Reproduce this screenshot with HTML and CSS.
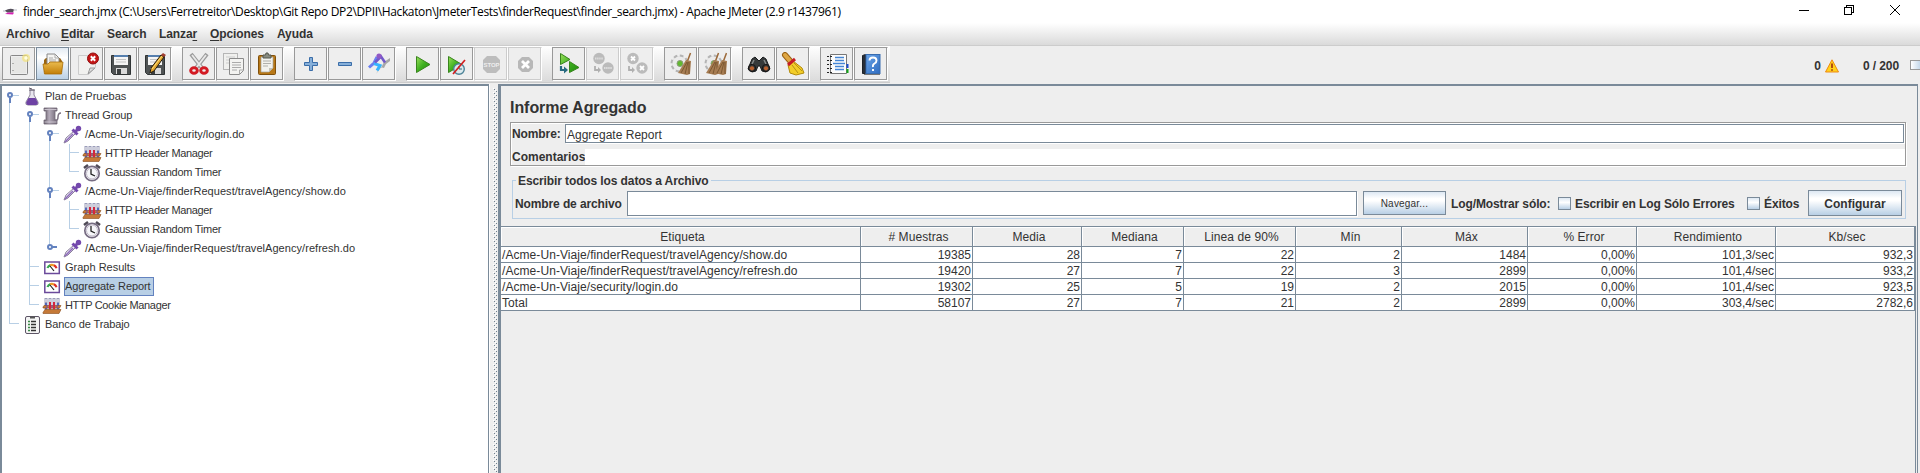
FILE: index.html
```html
<!DOCTYPE html>
<html lang="es">
<head>
<meta charset="utf-8">
<title>Apache JMeter</title>
<link rel="stylesheet" href="styles.css">
</head>
<body>
<svg class="defs" width="0" height="0">
  <defs>
    <linearGradient id="gGreen" x1="0" y1="0" x2="1" y2="1"><stop offset="0" stop-color="#9be05c"/><stop offset=".5" stop-color="#3fb020"/><stop offset="1" stop-color="#1f8a0c"/></linearGradient>
    <linearGradient id="gFolder" x1="0" y1="0" x2="0" y2="1"><stop offset="0" stop-color="#eabb4e"/><stop offset="1" stop-color="#c27e08"/></linearGradient>
    <linearGradient id="gBook" x1="0" y1="0" x2="1" y2="1"><stop offset="0" stop-color="#6aa4e8"/><stop offset="1" stop-color="#2f6cc0"/></linearGradient>
    <linearGradient id="gSpool" x1="0" y1="0" x2="1" y2="0"><stop offset="0" stop-color="#5d5560"/><stop offset=".4" stop-color="#b5acba"/><stop offset="1" stop-color="#6d6472"/></linearGradient>
    <symbol id="page" viewBox="0 0 24 24"><rect x="3.500" y="3.500" width="17" height="19" rx="1" fill="#eee" stroke="#888"/><rect x="5" y="5" width="14" height="16" fill="#e6e6e4"/><circle cx="19" cy="6" r="4" fill="#f3e37a" opacity=".7"/><circle cx="19" cy="6" r="1.800" fill="#fffde0"/><path d="M6 11v1M6 18v1" stroke="#777"/></symbol>
    <symbol id="open" viewBox="0 0 24 24"><path d="M3 8l2-2h14l2 3v11H3z" fill="#9a6510"/><path d="M6 2h8l4 4v10H6z" fill="#f4f4f2" stroke="#888"/><path d="M14 2v4h4M8 6h4M8 8h7M8 10h7" fill="none" stroke="#aaa"/><path d="M2 12h5l2-2h13l-1.500 12H3.500z" fill="url(#gFolder)" stroke="#a86d08" stroke-width=".8"/></symbol>
    <symbol id="close" viewBox="0 0 24 24"><path d="M3.500 3.500h17v12l-7 7h-10z" fill="#f1f1ef" stroke="#ccc"/><path d="M20 16h-5l-2 6z" fill="#ddd" stroke="#999"/><circle cx="18" cy="6.500" r="5.500" fill="#c41616" stroke="#921010"/><path d="M15.800 4.300l4.400 4.400m0-4.400l-4.400 4.400" stroke="#fff" stroke-width="2"/></symbol>
    <symbol id="save" viewBox="0 0 24 24"><path d="M2.500 3.500h19v19h-17l-2-2z" fill="#4f5354" stroke="#303435"/><rect x="5" y="3" width="14" height="10" fill="#f5f5f5"/><rect x="5" y="3" width="14" height="2" fill="#567fae"/><path d="M7 7.500h10M7 10h10" stroke="#c3c3c3"/><rect x="7" y="16" width="11" height="6" fill="#dadada"/><rect x="8" y="17" width="4" height="5" fill="#3c4041"/></symbol>
    <symbol id="pencil" viewBox="0 0 24 24"><path d="M8 16L18 3l3 2L11 19l-4 2z" fill="#e1a52d" stroke="#241a0c"/><path d="M9 17L19 4" stroke="#ffe07b"/><path d="M18 3l2-2 3 2-2 2z" fill="#a13e30"/></symbol>
    <symbol id="cut" viewBox="0 0 24 24"><path d="M4 2l11 14M20 2L9 16" stroke="#9b9b9b" stroke-width="4"/><path d="M5 3l10 13M19 3L9 16" stroke="#e9e9e9" stroke-width="1.800"/><ellipse cx="7" cy="18.500" rx="3.300" ry="2.800" fill="none" stroke="#d31b24" stroke-width="3"/><ellipse cx="17" cy="18.500" rx="3.300" ry="2.800" fill="none" stroke="#d31b24" stroke-width="3"/></symbol>
    <symbol id="copy" viewBox="0 0 24 24"><rect x="2.500" y="1.500" width="14" height="16" fill="#f0f0ee" stroke="#b6b6b6"/><path d="M5 5h9M5 8h9M5 11h3" stroke="#ccc"/><path d="M8.500 6.500h14v12l-4 4h-10z" fill="#f3f3f1" stroke="#8b8b8b"/><path d="M11 10.500h9M11 13h9M11 15.500h9M11 18h5M18.500 22v-4h4" fill="none" stroke="#aaa"/></symbol>
    <symbol id="paste" viewBox="0 0 24 24"><rect x="3.500" y="3.500" width="17" height="19" rx="1" fill="#b87817" stroke="#80500c"/><path d="M6 5h12v11l-4 4H6z" fill="#f2f2ee" stroke="#a4a49d" stroke-width=".7"/><path d="M8 9h8M8 11.500h8M8 14h5" stroke="#b0b0ac"/><path d="M8 6V3h2.500l.5-2h2l.5 2H16v3z" fill="#888b80" stroke="#55584e"/><path d="M18 16h-4v4z" fill="#c2c2b9"/></symbol>
    <symbol id="plus" viewBox="0 0 24 24"><path d="M10.500 5.500h3v5h5v3h-5v5h-3v-5h-5v-3h5z" fill="#86afd9" stroke="#3a6da8"/></symbol>
    <symbol id="minus" viewBox="0 0 24 24"><path d="M5.500 10.500h13v3h-13z" fill="#86afd9" stroke="#3a6da8"/></symbol>
    <symbol id="toggle" viewBox="0 0 24 24"><path d="M9 22l6-8 2-4 6-4v3l-4 3-2 4-4-1z" fill="#a6a6a6"/><path d="M2 15.500l5-4.500 3-6" fill="none" stroke="#6b7ff0" stroke-width="3"/><path d="M7 11.500l6 2-3 5" fill="none" stroke="#36b4ff" stroke-width="3"/><path d="M8 10.500l6-6 4 6" fill="none" stroke="#7258c9" stroke-width="2.600"/><circle cx="12" cy="4" r="2.600" fill="#9158c5"/></symbol>
    <symbol id="play" viewBox="0 0 24 24"><path d="M5.500 4.500v16L19 12.500z" fill="url(#gGreen)" stroke="#39841e"/></symbol>
    <symbol id="nopause" viewBox="0 0 24 24"><path d="M3.500 4.500v16L17 12.500z" fill="url(#gGreen)" stroke="#39841e"/><circle cx="14" cy="17" r="5.300" fill="#dbe9ed" stroke="#4c8397" stroke-width="1.400"/><path d="M14 14v3h3" fill="none" stroke="#396678"/><path d="M8 22L20 8" stroke="#d31e1e" stroke-width="1.700"/></symbol>
    <symbol id="stop" viewBox="0 0 24 24"><path d="M8 4h9l4 4v9l-4 4H8l-4-4V8z" fill="#bdbdbd"/><text x="12.500" y="15.300" class="stop-word">STOP</text></symbol>
    <symbol id="shut" viewBox="0 0 24 24"><path d="M9 5h7l4 4v7l-4 4H9l-4-4V9z" fill="#b8b8b8"/><path d="M9 9l7 7m0-7l-7 7" stroke="#fff" stroke-width="2.800"/></symbol>
    <symbol id="remote" viewBox="0 0 24 24"><path d="M3.500 1.500v11L13 7.500zM12.500 9.500v11L22 15.500z" fill="url(#gGreen)" stroke="#39841e"/><path d="M4 14v4h4" fill="none" stroke="#286a80" stroke-width="2.200"/><path d="M7 14.500l4 3.500-4 3.500z" fill="#286a80"/></symbol>
    <symbol id="remoteoff" viewBox="0 0 24 24"><circle cx="8" cy="6.500" r="5.700" fill="#bbb"/><circle cx="17" cy="16" r="5.700" fill="#bbb"/><path d="M4 14v4h4" fill="none" stroke="#b0b0b0" stroke-width="1.800"/><path d="M7 15l3 3-3 3z" fill="#b0b0b0"/></symbol>
    <symbol id="gear" viewBox="0 0 24 24"><circle cx="10.500" cy="11.500" r="7.500" fill="#ddd" stroke="#b4b4b4" stroke-width="3" stroke-dasharray="3.500 2.400"/><circle cx="10.500" cy="11.500" r="7" fill="#ebebeb"/><circle cx="11" cy="11.500" r="3" fill="#62b930" stroke="#8d9b7e"/></symbol>
    <symbol id="broom" viewBox="0 0 24 24"><path d="M21.500 1l-3 8" stroke="#9c6a3a" stroke-width="1.500"/><path d="M17 8l5 1-1 13-3 1-9-2z" fill="#a67c52"/><path d="M18 10l-6 11M19 10l-3 12M20 10v12" stroke="#684722" stroke-width=".7"/></symbol>
    <symbol id="find" viewBox="0 0 24 24"><path d="M5 7l3-2 4 4 4-4 3 2 4 10-4 3-4-1-2-5h-2l-2 5-4 1-4-3z" fill="#35393a" stroke="#181b1c"/><circle cx="5" cy="16" r="3.600" fill="#343434" stroke="#151515"/><circle cx="19" cy="16" r="3.600" fill="#343434" stroke="#151515"/><circle cx="5" cy="16.300" r="2.100" fill="#b7602e"/><circle cx="19" cy="16.300" r="2.100" fill="#b7602e"/><path d="M7 8l-2 4M17 8l2 4" stroke="#858989" stroke-width="1.500"/></symbol>
    <symbol id="sweep" viewBox="0 0 24 24"><path d="M4 3l6 7" stroke="#9a6215" stroke-width="6" stroke-linecap="round"/><path d="M4 3l6 7" stroke="#dfa743" stroke-width="4" stroke-linecap="round"/><path d="M12 9l9 7 2 5-8 2-6-2-2-8z" fill="#f2cd28" stroke="#b28a0a"/><path d="M7 13l7-6" stroke="#c61c25" stroke-width="3"/><path d="M11 13l6 8M13 11l8 8" stroke="#b69311"/></symbol>
    <symbol id="func" viewBox="0 0 24 24"><path d="M5.500 2.500h16v19h-16z" fill="#fcfcfc" stroke="#777"/><path d="M2 4.500h5M2 8.500h5M2 12.500h5M2 16.500h5M2 20.500h5" stroke="#222" stroke-dasharray="2 1"/><path d="M10 5.500h9M10 8.500h9M10 14.500h9M10 17.500h9M8 11.500h12" stroke="#4586d5" stroke-width="1.400"/><path d="M22.500 12v4" stroke="#1a4ccf" stroke-width="2"/><path d="M22.500 17v4" stroke="#12a518" stroke-width="2"/></symbol>
    <symbol id="help" viewBox="0 0 24 24"><path d="M3.500 3.500l3-1v19h-3z" fill="#292f38" stroke="#1c2128"/><rect x="7" y="2.500" width="14" height="19" fill="url(#gBook)" stroke="#386caf"/><path d="M5 22.500h16" stroke="#777"/><path d="M10.500 8.500q0-3 3.500-3t3.500 3q0 2-2 3t-1.500 3.500m0 2v2" fill="none" stroke="#fff" stroke-width="1.900"/></symbol>
    <symbol id="flask" viewBox="0 0 20 20"><path d="M8 3h4v5l4 7q1 3-2 3H6q-3 0-2-3l4-7z" fill="#e8e6ee" stroke="#8d8599"/><path d="M6.500 11h7l2.500 5-1.500 2h-9L4 16z" fill="#6e42a4"/><path d="M7 3h6M7 1l3 1" stroke="#615b69"/></symbol>
    <symbol id="spool" viewBox="0 0 20 20"><path d="M2 2h13v3h-2v9h2v4H2v-4h2V5H2z" fill="url(#gSpool)" stroke="#736b79" stroke-width=".8"/><path d="M2.500 3.500h12M2.500 16h12" stroke="#c8c1cc"/><path d="M13 14q3 1 3-3t3-4" fill="none" stroke="#7c7181" stroke-width="1.500"/></symbol>
    <symbol id="drop" viewBox="0 0 20 20"><path d="M2 18l2-5 8-7 2 2-8 8z" fill="#eeebf5" stroke="#8a7f9c"/><path d="M3 17l8-8" stroke="#8d6bb9" stroke-width="1.600"/><path d="M10.500 4.500l5 5M13 7l4-4" stroke="#7449ad" stroke-width="3"/><circle cx="16.500" cy="3.500" r="2.700" fill="#7449ad"/></symbol>
    <symbol id="rack" viewBox="0 0 20 20"><path d="M4 2v12M8 2v12M12 2v12M16 2v12" stroke="#9a9cb8" stroke-width="3"/><path d="M4 3v3M8 3v3M12 3v3M16 3v3" stroke="#fff"/><path d="M4 7v6M16 7v6" stroke="#5268bb" stroke-width="2"/><path d="M1 11l1-1.500h17l-1.500 2.500H1zM1 16.500l2-3h16l-2 4H1z" fill="#c57937" stroke="#8a4c1a" stroke-width=".6"/><path d="M8 6v7M12 6v7" stroke="#d3263e" stroke-width="2"/><path d="M5 9v3M10 9v3M15 9v3" stroke="#754bad"/></symbol>
    <symbol id="clock" viewBox="0 0 20 20"><path d="M2 5l4-3M18 5l-4-3" stroke="#4f4a56" stroke-width="2.500"/><circle cx="10" cy="10.500" r="7.200" fill="#fff" stroke="#766c82" stroke-width="1.700"/><circle cx="10" cy="10.500" r="5.500" fill="#f7f7fa" stroke="#c1bac9"/><path d="M9 6v5l4 2" fill="none" stroke="#222" stroke-width="1.300"/></symbol>
    <symbol id="gauge" viewBox="0 0 20 20"><rect x="2.800" y="4" width="14.500" height="11.500" fill="#fff" stroke="#6b4a9b" stroke-width="1.500"/><path d="M5.500 10a5 5 0 0 1 3-3" fill="none" stroke="#38a650" stroke-width="2.200"/><path d="M8 7.200a6 6 0 0 1 4 .2" fill="none" stroke="#ef9b2a" stroke-width="2.200"/><path d="M12 7.200a5 5 0 0 1 2.500 3" fill="none" stroke="#e02c25" stroke-width="2.200"/><path d="M8 8l4 5" stroke="#222" stroke-width="1.200"/></symbol>
    <symbol id="bench" viewBox="0 0 20 20"><rect x="3.500" y="1.500" width="14" height="17" rx="1.500" fill="#f4f4f4" stroke="#5d5566"/><path d="M8 2.500h5" stroke="#555" stroke-width="2"/><path d="M6 6.500h2M6 9.500h2M6 12.500h2M6 15.500h2" stroke="#3a8a46" stroke-width="1.500"/><path d="M9 6.500h5M9 9.500h5M9 12.500h5M9 15.500h5" stroke="#333" stroke-width="1.500"/></symbol>
  </defs>
</svg>

<div class="window">
  <header class="titlebar">
    <svg class="feather" viewBox="0 0 14 8"><path d="M0 3h3M11 2h3" stroke="#b9b9c4"/><path d="M2 2.500q5-3 9-1l-1 3H4z" fill="#55505c"/><path d="M2 6l3-1.500h6l-1 2z" fill="#d81fb5"/></svg>
    <span class="caption">finder_search.jmx (C:\Users\Ferretreitor\Desktop\Git Repo DP2\DPII\Hackaton\JmeterTests\finderRequest\finder_search.jmx) - Apache JMeter (2.9 r1437961)</span>
    <svg class="winctl" viewBox="0 0 102 12" shape-rendering="crispEdges"><path d="M0 6.500h10" stroke="#000" fill="none"/><path d="M45.500 3.500h7v7h-7zM47.500 3.500v-2h7v7h-2" fill="none" stroke="#000"/><path d="M91 1l10 10M101 1L91 11" stroke="#000" shape-rendering="auto"/></svg>
  </header>
  <nav class="menubar">
    <span class="m1">Archivo</span><span class="m2"><u>E</u>ditar</span><span class="m3">Search</span><span class="m4">Lanza<u>r</u></span><span class="m5"><u>O</u>pciones</span><span>Ayuda</span>
  </nav>
  <div class="toolrow">
    <div class="toolbar">
      <div class="group">
        <button><svg><use href="#page"/></svg></button><button class="hot"><svg><use href="#open"/></svg></button><button><svg><use href="#close"/></svg></button><button><svg><use href="#save"/></svg></button><button><svg><use href="#save"/><use href="#pencil"/></svg></button>
      </div>
      <div class="group">
        <button><svg><use href="#cut"/></svg></button><button><svg><use href="#copy"/></svg></button><button><svg><use href="#paste"/></svg></button>
      </div>
      <div class="group">
        <button><svg><use href="#plus"/></svg></button><button><svg><use href="#minus"/></svg></button><button><svg><use href="#toggle"/></svg></button>
      </div>
      <div class="group">
        <button><svg><use href="#play"/></svg></button><button><svg><use href="#nopause"/></svg></button><button class="off"><svg><use href="#stop"/></svg></button><button class="off"><svg><use href="#shut"/></svg></button>
      </div>
      <div class="group">
        <button><svg><use href="#remote"/></svg></button><button class="off"><svg><use href="#remoteoff"/><path d="M4 6.500h8M13 16h8" stroke="#ddd" stroke-width="2" stroke-dasharray="1.500 .6"/></svg></button><button class="off"><svg><use href="#remoteoff"/><path d="M6 4.500l4 4m0-4l-4 4M15 14l4 4m0-4l-4 4" stroke="#fff" stroke-width="1.800"/></svg></button>
      </div>
      <div class="group">
        <button><svg><use href="#gear"/><use href="#broom"/></svg></button><button><svg><use href="#gear"/><use href="#broom" x="-6"/><use href="#broom" x="2"/></svg></button>
      </div>
      <div class="group">
        <button><svg><use href="#find"/></svg></button><button><svg><use href="#sweep"/></svg></button>
      </div>
      <div class="group">
        <button><svg><use href="#func"/></svg></button><button><svg><use href="#help"/></svg></button>
      </div>
    </div>
    <div class="status">
      <span>0</span>
      <svg class="warn" viewBox="0 0 14 14"><path d="M7 .8L13.500 13H.5z" fill="#ffd21c" stroke="#ee8a12" stroke-linejoin="round"/><path d="M7 4.500v4.500M7 10.200v1.600" stroke="#a02c10" stroke-width="1.600"/></svg>
      <span class="threads">0 / 200</span>
      <i class="lamp"></i>
    </div>
  </div>
  <main class="split">
    <section class="tree">
      <div class="row"><i class="v0 knob"></i><b class="ic"><svg><use href="#flask"/></svg></b><span>Plan de Pruebas</span></div>
      <div class="row"><i class="v"></i><i class="v0 knob"></i><b class="ic"><svg><use href="#spool"/></svg></b><span class="t1">Thread Group</span></div>
      <div class="row"><i class="v"></i><i class="v"></i><i class="v0 knob"></i><b class="ic"><svg><use href="#drop"/></svg></b><span>/Acme-Un-Viaje/security/login.do</span></div>
      <div class="row"><i class="v"></i><i class="v"></i><i class="v"></i><i class="v tee"></i><b class="ic"><svg><use href="#rack"/></svg></b><span class="t3">HTTP Header Manager</span></div>
      <div class="row"><i class="v"></i><i class="v"></i><i class="v"></i><i class="ell tee"></i><b class="ic"><svg><use href="#clock"/></svg></b><span class="t2">Gaussian Random Timer</span></div>
      <div class="row"><i class="v"></i><i class="v"></i><i class="v knob"></i><b class="ic"><svg><use href="#drop"/></svg></b><span class="wide">/Acme-Un-Viaje/finderRequest/travelAgency/show.do</span></div>
      <div class="row"><i class="v"></i><i class="v"></i><i class="v"></i><i class="v tee"></i><b class="ic"><svg><use href="#rack"/></svg></b><span class="t3">HTTP Header Manager</span></div>
      <div class="row"><i class="v"></i><i class="v"></i><i class="v"></i><i class="ell tee"></i><b class="ic"><svg><use href="#clock"/></svg></b><span class="t2">Gaussian Random Timer</span></div>
      <div class="row"><i class="v"></i><i class="v"></i><i class="ell shutknob"></i><b class="ic"><svg><use href="#drop"/></svg></b><span class="wide">/Acme-Un-Viaje/finderRequest/travelAgency/refresh.do</span></div>
      <div class="row"><i class="v"></i><i class="v tee"></i><b class="ic"><svg><use href="#gauge"/></svg></b><span>Graph Results</span></div>
      <div class="row"><i class="v"></i><i class="v tee"></i><b class="ic"><svg><use href="#gauge"/></svg></b><span class="sel">Aggregate Report</span></div>
      <div class="row"><i class="v"></i><i class="ell tee"></i><b class="ic"><svg><use href="#rack"/></svg></b><span class="t3">HTTP Cookie Manager</span></div>
      <div class="row"><i class="ell tee"></i><b class="ic"><svg><use href="#bench"/></svg></b><span class="t1">Banco de Trabajo</span></div>
    </section>
    <div class="divider"><svg width="6" height="384"><defs><pattern id="bumps" width="4" height="4" patternUnits="userSpaceOnUse"><path d="M0 0h1v1H0zM2 2h1v1H2z" fill="#fff"/><path d="M1 1h1v1H1zM3 3h1v1H3z" fill="#6f7f8e"/></pattern></defs><rect width="4" height="384" fill="url(#bumps)"/></svg></div>
    <section class="panel">
      <h1>Informe Agregado</h1>
      <div class="naming">
        <div class="line1"><label>Nombre:</label><div class="field">Aggregate Report</div></div>
        <div class="line2"><label>Comentarios</label><div class="plain"></div></div>
      </div>
      <fieldset>
        <legend>Escribir todos los datos a Archivo</legend>
        <label class="fname">Nombre de archivo</label>
        <div class="field file"></div>
        <div class="btn small">Navegar...</div>
        <span class="log">Log/Mostrar sólo:</span>
        <i class="check"></i><span class="errs">Escribir en Log Sólo Errores</span>
        <i class="check"></i><span class="oks">Éxitos</span>
        <div class="btn conf">Configurar</div>
      </fieldset>
      <div class="scroll">
        <table>
          <colgroup><col class="c0"><col class="c1"><col class="c2"><col class="c3"><col class="c4"><col class="c5"><col class="c6"><col class="c7"><col class="c8"><col class="c9"></colgroup>
          <thead><tr><th>Etiqueta</th><th># Muestras</th><th>Media</th><th>Mediana</th><th>Linea de 90%</th><th>Mín</th><th>Máx</th><th>% Error</th><th>Rendimiento</th><th>Kb/sec</th></tr></thead>
          <tbody>
            <tr><td>/Acme-Un-Viaje/finderRequest/travelAgency/show.do</td><td>19385</td><td>28</td><td>7</td><td>22</td><td>2</td><td>1484</td><td>0,00%</td><td>101,3/sec</td><td>932,3</td></tr>
            <tr><td>/Acme-Un-Viaje/finderRequest/travelAgency/refresh.do</td><td>19420</td><td>27</td><td>7</td><td>22</td><td>3</td><td>2899</td><td>0,00%</td><td>101,4/sec</td><td>933,2</td></tr>
            <tr><td>/Acme-Un-Viaje/security/login.do</td><td>19302</td><td>25</td><td>5</td><td>19</td><td>2</td><td>2015</td><td>0,00%</td><td>101,4/sec</td><td>923,5</td></tr>
            <tr><td>Total</td><td>58107</td><td>27</td><td>7</td><td>21</td><td>2</td><td>2899</td><td>0,00%</td><td>303,4/sec</td><td>2782,6</td></tr>
          </tbody>
        </table>
      </div>
    </section>
  </main>
</div>
</body>
</html>
```

FILE: styles.css
```css
*, *::before, *::after { box-sizing: border-box; }
body { margin: 0; overflow: hidden; background: #eee; color: #333; font: 12px "Liberation Sans", Arial, sans-serif; }
.defs { position: absolute; }
.window { display: flex; flex-direction: column; width: 1920px; height: 473px; }
span, label, legend, h1, td, th { white-space: nowrap; }

.titlebar { display: flex; align-items: center; height: 23px; background: #fff; color: #000; padding-left: 3px; }
.feather { width: 14px; height: 8px; }
.caption { margin-left: 6px; font: 12px/23px "Open Sans", sans-serif; letter-spacing: -0.355px; }
.winctl { width: 102px; height: 12px; margin-left: auto; margin-right: 19px; margin-top: -4px; }

.menubar { display: flex; height: 23px; padding: 0 0 0 6px; line-height: 22px; font-weight: bold; letter-spacing: -0.1px; background: linear-gradient(#fff, #dadada); border-bottom: 1px solid #ccc; }
.m1 { width: 55px; } .m2 { width: 46px; } .m3 { width: 52px; } .m4 { width: 51px; } .m5 { width: 67px; }
u { text-underline-offset: 2px; }

.toolrow { display: flex; justify-content: space-between; height: 38px; }
.toolbar { display: flex; gap: 10px; width: 890px; height: 37px; padding: 1px 0 0 2px; background: linear-gradient(#fff, #dadada); border-bottom: 1px solid #ccc; }
.group { display: flex; }
button { display: flex; align-items: center; justify-content: center; width: 34px; height: 34px; padding: 0 1px 1px 0; background: #eee; border: 1px solid #999; border-right-color: #fff; border-bottom-color: #fff; box-shadow: inset -1px -1px #999; }
button svg { width: 24px; height: 24px; }
.hot { background: linear-gradient(#e3ebf3, #fff 30%, #b8cfe5); border-color: #7a8a99 #fff #fff #7a8a99; box-shadow: inset -1px -1px #7a8a99; }
.off { border-color: #ccc #fff #fff #ccc; box-shadow: inset -1px -1px #ccc; }
.stop-word { font: bold 6px "Liberation Sans", sans-serif; text-anchor: middle; fill: #eee; }
.status { display: flex; align-items: center; font-weight: bold; padding-top: 1px; }
.warn { width: 14px; height: 14px; margin-left: 4px; }
.threads { margin-left: 24px; width: 37px; letter-spacing: -0.1px; }
.lamp { width: 10px; height: 10px; margin: -2px 0 0 10px; border: 1px solid #999; border-right: 0; background: linear-gradient(90deg, #fff, #c5d8ea); }

.split { display: flex; height: 389px; }
.tree { width: 489px; padding-top: 1px; background: #fff; border: solid #7a8a99; border-width: 2px 1px 0 2px; font-size: 11px; }
.row { display: flex; height: 19px; margin-left: -2px; }
.row i { position: relative; width: 20px; height: 19px; }
.v { background: linear-gradient(#b8cfe5, #b8cfe5) 9px 0 / 1px 19px no-repeat; }
.v0 { background: linear-gradient(#b8cfe5, #b8cfe5) 9px 9px / 1px 10px no-repeat; }
.ell { background: linear-gradient(#b8cfe5, #b8cfe5) 9px 0 / 1px 9px no-repeat; }
.tee::after { content: ""; position: absolute; left: 9px; top: 8px; width: 10px; height: 1px; background: #b8cfe5; }
.knob::before, .shutknob::before { content: ""; position: absolute; left: 7px; top: 5px; width: 6px; height: 6px; border: 2px solid #6382bf; border-radius: 50%; background: #fff; }
.knob::after { content: ""; position: absolute; left: 9px; top: 8px; width: 10px; height: 8px; background: linear-gradient(#6382bf, #6382bf) 0 3px / 2px 5px no-repeat, linear-gradient(#b8cfe5, #b8cfe5) 4px 0 / 6px 1px no-repeat; }
.shutknob::after { content: ""; position: absolute; left: 12px; top: 7px; width: 5px; height: 2px; background: #6382bf; }
.ic { width: 24px; height: 19px; padding-left: 2px; }
.ic svg { display: block; width: 20px; height: 20px; }
.row span { height: 19px; padding: 0 2px 0 1px; line-height: 19px; }
.row .t1 { letter-spacing: -0.1px; }
.row .t2 { letter-spacing: -0.26px; }
.row .t3 { letter-spacing: -0.36px; }
.row .wide { letter-spacing: 0.05px; }
.row .sel { width: 90px; padding: 0; border: 1px solid #6382bf; background: #b8cfe5; line-height: 17px; letter-spacing: -0.08px; }

.divider { width: 9px; padding: 4px 0 0 3px; background: #eee; border-left: 1px solid #fff; }
.divider svg { display: block; }
.panel { display: flex; flex-direction: column; width: 1420px; border: solid #7a8a99; border-width: 2px 1px 0 3px; }
h1 { margin: 13px 0 0 9px; height: 23px; font: bold 16px/18px "Liberation Sans", Arial, sans-serif; letter-spacing: -0.05px; }
.naming { width: 1396px; height: 44px; margin-left: 9px; border: 1px solid #999; box-shadow: 1px 1px #fff, inset 1px 1px #fff; font-weight: bold; }
.line1, .line2 { display: flex; }
.line1 { height: 20px; padding: 1px 1px 0 1px; line-height: 20px; }
.line1 label { width: 53px; letter-spacing: -0.1px; }
.field { flex: 1; height: 19px; border: 1px solid #7a8a99; background: #fff; box-shadow: 1px 1px #fff; font-weight: normal; padding-left: 1px; }
.line2 { margin-top: 6px; height: 16px; padding-left: 1px; line-height: 17px; }
.line2 label { width: 73px; }
.plain { flex: 1; background: #fff; }
fieldset { display: flex; align-items: center; position: relative; width: 1394px; height: 39px; margin: 14px 0 0 11px; padding: 9px 2px 2px; border: 1px solid #b8cfe5; font-weight: bold; line-height: 16px; letter-spacing: -0.11px; }
legend { position: absolute; left: 3px; top: -8px; padding: 0 2px; height: 16px; line-height: 17px; background: #eee; }
.fname { width: 112px; padding-top: 1px; }
.file { flex: none; width: 730px; height: 25px; }
.btn { height: 26px; border: 1px solid #7a8a99; background: linear-gradient(#dde8f3, #fff 30%, #fff 40%, #b8cfe5); text-align: center; line-height: 26px; letter-spacing: 0; }
.small { width: 83px; height: 24px; margin-left: 6px; font-weight: normal; font-size: 10px; line-height: 24px; letter-spacing: .2px; }
.log { width: 107px; margin-left: 5px; padding-top: 1px; }
.check { width: 13px; height: 13px; margin-right: 4px; border: 1px solid #7a8a99; background: linear-gradient(#dde8f3, #fff 40%, #b8cfe5); }
.errs { width: 172px; padding-top: 1px; }
.oks { width: 44px; padding-top: 1px; }
.conf { width: 94px; }
.scroll { flex: 1; width: 1415px; margin-top: 7px; border: solid #7a8a99; border-width: 1px 1px 0 0; }
table { width: 1414px; table-layout: fixed; border-collapse: separate; border-spacing: 0; }
.c0 { width: 360px; } .c1 { width: 112px; } .c2 { width: 109px; } .c3 { width: 102px; } .c4 { width: 112px; }
.c5 { width: 106px; } .c6 { width: 126px; } .c7 { width: 109px; } .c8 { width: 139px; } .c9 { width: 139px; }
th, td { padding: 0 1px; border: solid #7a8a99; border-width: 0 1px 1px 0; font-weight: normal; }
th { height: 20px; padding: 2px 0 0 4px; box-shadow: inset 1px 1px #fff; line-height: 17px; letter-spacing: 0.08px; }
td { height: 16px; padding-top: 1px; background: #fff; text-align: right; line-height: 14px; }
td:first-child { text-align: left; letter-spacing: 0.07px; }
```
